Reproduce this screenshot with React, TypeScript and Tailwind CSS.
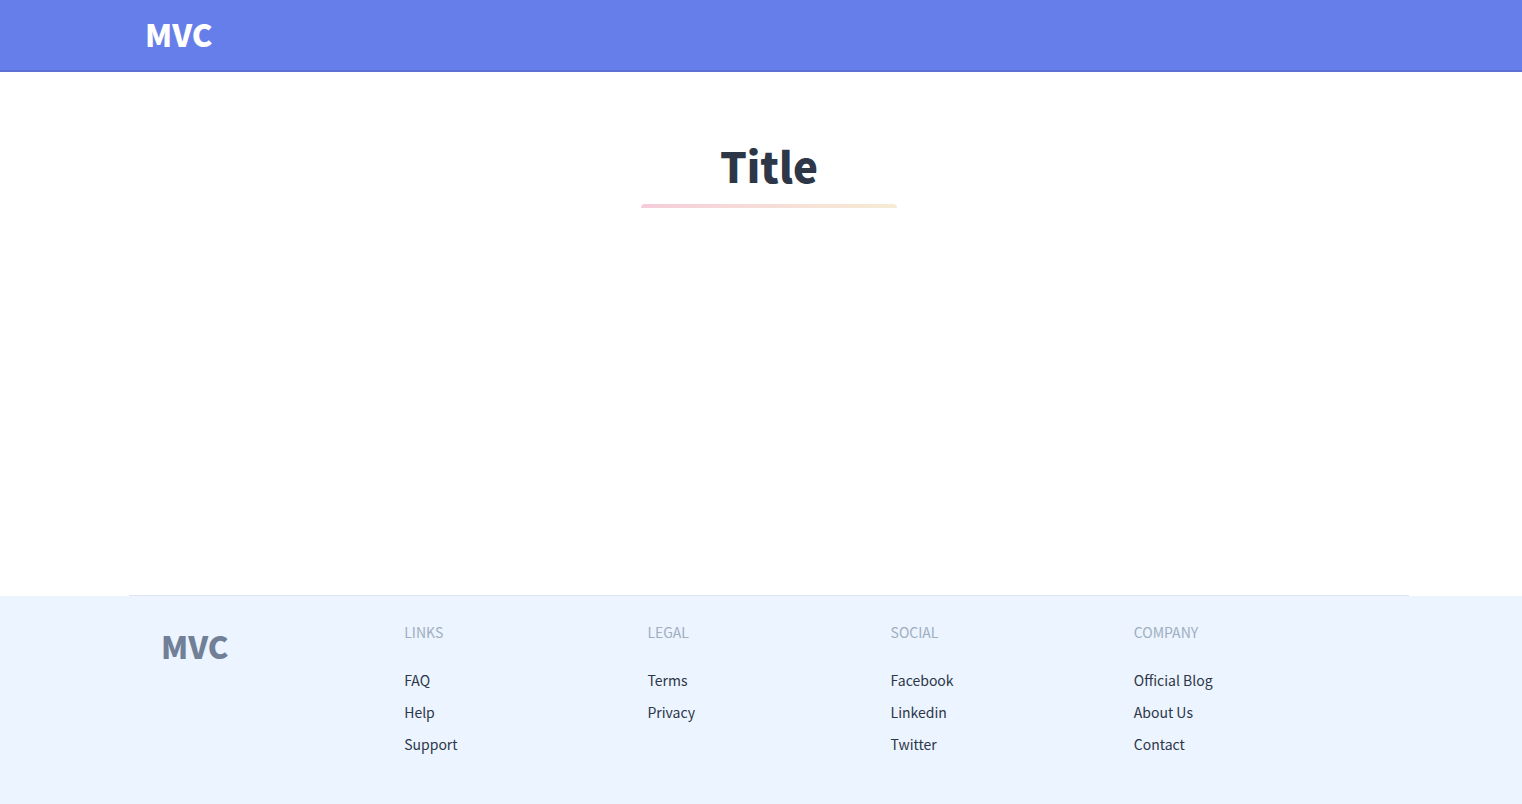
const columns = [
  { title: "Links", links: ["FAQ", "Help", "Support"] },
  { title: "Legal", links: ["Terms", "Privacy"] },
  { title: "Social", links: ["Facebook", "Linkedin", "Twitter"] },
  { title: "Company", links: ["Official Blog", "About Us", "Contact"] },
];

function Header() {
  return (
    <header className="border-b-2 border-[#5c71d3] bg-[#667eea] pl-4">
      <div className="mx-auto max-w-7xl px-4 pt-4 pb-[18px]">
        <a href="#" className="block text-[31px] leading-9 font-black text-white">
          MVC
        </a>
      </div>
    </header>
  );
}

function Footer() {
  return (
    <footer className="bg-[#ebf4ff] pl-4">
      <div className="mx-auto grid max-w-7xl grid-cols-5 px-8 pt-6 pb-6">
        <div className="pt-2">
          <a href="#" className="block text-[31px] leading-9 font-black text-[#718096]">
            MVC
          </a>
        </div>
        {columns.map((column) => (
          <nav key={column.title} aria-label={column.title}>
            <p className="mb-6 leading-6 text-[#a0aec0] uppercase">{column.title}</p>
            <ul className="mb-6 flex flex-col gap-2">
              {column.links.map((link) => (
                <li key={link} className="leading-6">
                  <a href="#" className="text-[#2d3748]">
                    {link}
                  </a>
                </li>
              ))}
            </ul>
          </nav>
        ))}
      </div>
    </footer>
  );
}

export default function App() {
  return (
    <div className="flex min-h-screen flex-col bg-white font-['Noto_Sans_CJK_SC',sans-serif] text-[14px]">
      <Header />
      <main className="flex-1 pt-16 pl-4">
        <h1 className="text-center text-[42px] leading-[58px] font-black text-[#2d3748]">Title</h1>
        <div className="mx-auto mt-2.5 h-1 w-64 rounded-t bg-linear-to-r from-[#d53369] to-[#daae51] opacity-25" />
      </main>
      <div className="pl-4">
        <hr className="mx-auto max-w-7xl border-[#dfe5ee]" />
      </div>
      <Footer />
    </div>
  );
}
